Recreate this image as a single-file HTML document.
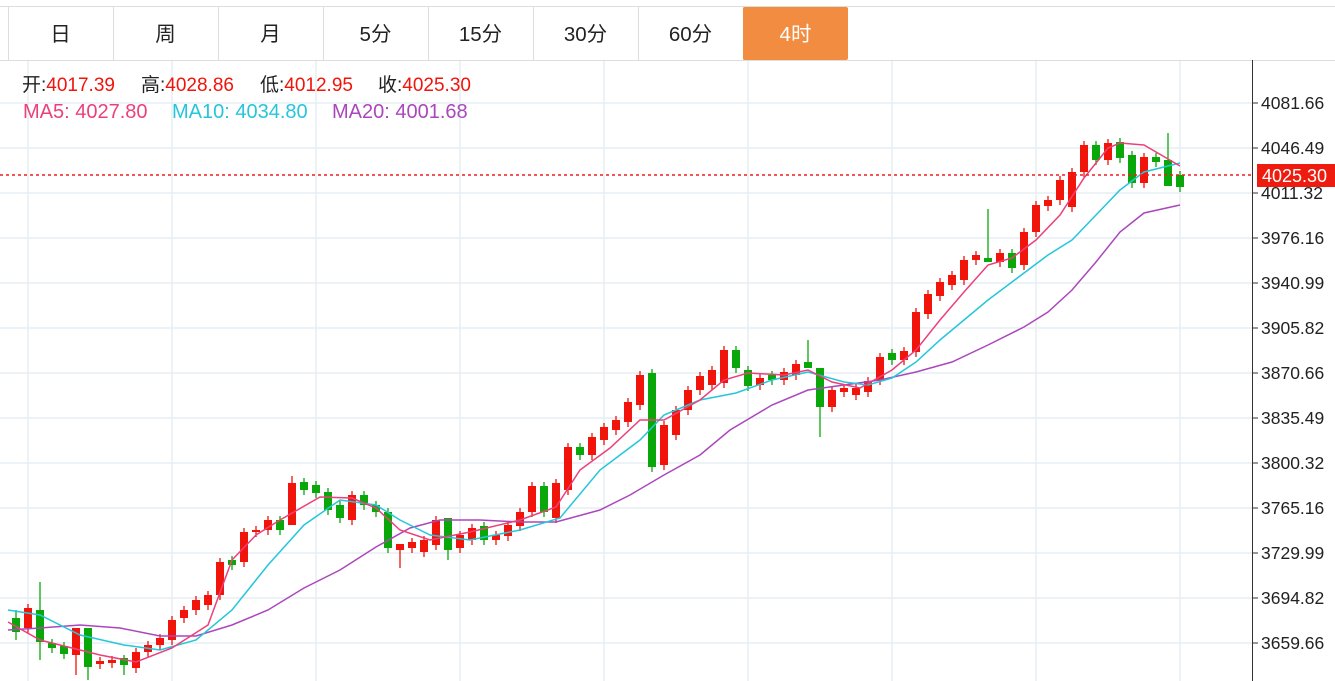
<!DOCTYPE html>
<html><head><meta charset="utf-8"><style>
body{margin:0;width:1335px;height:681px;overflow:hidden;background:#fff;font-family:"Liberation Sans","Noto Sans CJK SC",sans-serif}
svg{position:absolute;left:0;top:0}
</style></head><body>
<svg id="s" width="1335" height="681" xmlns="http://www.w3.org/2000/svg" font-family="Liberation Sans, Noto Sans CJK SC, sans-serif">
<g stroke="#e6eef4" stroke-width="1.5" id="grid"></g>
<line x1="0" y1="6.5" x2="1335" y2="6.5" stroke="#ddd"/>
<line x1="0" y1="60.5" x2="1335" y2="60.5" stroke="#ddd"/>
<g id="tabs"></g>
<line x1="1252.5" y1="60" x2="1252.5" y2="681" stroke="#333"/>
<g id="axis" font-size="17.5" fill="#222"></g>
<g id="candles"></g>
<polyline fill="none" stroke="#ab47bc" stroke-width="1.5" points="8,630 40,628 80,625 120,628 160,636 196,636 232,625 268,610 304,588 340,570 376,547 410,528 440,520 480,520 520,522 556,522 600,510 630,495 664,475 700,455 730,430 772,405 808,390 844,385 880,380 916,372 952,362 988,345 1024,327 1048,312 1072,290 1096,262 1120,232 1144,213 1180,205"/>
<polyline fill="none" stroke="#26c6da" stroke-width="1.5" points="8,610 40,615 80,635 124,645 160,650 196,640 232,610 268,565 304,525 340,500 376,505 400,520 430,535 470,540 520,530 560,518 600,470 640,440 664,415 700,400 736,393 772,380 808,372 844,382 868,385 892,378 916,362 940,340 964,320 988,300 1012,282 1048,255 1072,240 1096,215 1120,190 1144,172 1180,163"/>
<polyline fill="none" stroke="#ec407a" stroke-width="1.5" points="8,622 40,640 100,655 136,662 172,648 208,625 232,560 256,535 280,520 320,497 352,498 376,508 400,530 430,540 470,532 520,520 556,507 580,470 610,448 640,420 664,420 700,400 724,380 748,373 784,375 808,370 832,382 860,388 892,370 916,350 940,320 964,292 988,265 1012,258 1036,240 1060,215 1084,178 1108,148 1120,143 1144,145 1180,166"/>
<line x1="0" y1="175" x2="1252" y2="175" stroke="#f01e1e" stroke-width="1.5" stroke-dasharray="3,3"/>
<rect x="1257" y="164" width="78" height="23" fill="#ee1c0e"/>
<text x="1262" y="182" font-size="18" fill="#fff">4025.30</text>
<text y="91" font-size="19"><tspan fill="#222" x="22">开:</tspan><tspan fill="#f0140a">4017.39</tspan><tspan fill="#222" x="141">高:</tspan><tspan fill="#f0140a">4028.86</tspan><tspan fill="#222" x="260">低:</tspan><tspan fill="#f0140a">4012.95</tspan><tspan fill="#222" x="378">收:</tspan><tspan fill="#f0140a">4025.30</tspan></text>
<text y="118" font-size="20"><tspan fill="#ec407a" x="23">MA5: 4027.80</tspan><tspan fill="#26c6da" x="172">MA10: 4034.80</tspan><tspan fill="#ab47bc" x="332">MA20: 4001.68</tspan></text>
</svg>
<script>
const N="http://www.w3.org/2000/svg",g=id=>document.getElementById(id);
function el(p,t,a,tx){const e=document.createElementNS(N,t);for(const k in a)e.setAttribute(k,a[k]);if(tx)e.textContent=tx;g(p).appendChild(e);}
const ys=[103,148,193,238,283,328,373,418,463,508,553,598,643],lab=["4081.66","4046.49","4011.32","3976.16","3940.99","3905.82","3870.66","3835.49","3800.32","3765.16","3729.99","3694.82","3659.66"];
ys.forEach((y,i)=>{el("grid","line",{x1:0,x2:1252,y1:y,y2:y});el("axis","line",{x1:1252,x2:1258,y1:y,y2:y,stroke:"#333"});el("axis","text",{x:1261,y:y+6},lab[i]);});
for(let x=28;x<1252;x+=144)el("grid","line",{x1:x,x2:x,y1:60,y2:681});
const tb=["日","周","月","5分","15分","30分","60分","4时"];
tb.forEach((t,i)=>{const x=8+i*105;if(i==7)el("tabs","rect",{x:x,y:7,width:105,height:53,rx:2,fill:"#f28c40"});else el("tabs","line",{x1:x+105.5,x2:x+105.5,y1:7,y2:60,stroke:"#ddd"});el("tabs","text",{x:x+52.5,y:41,"text-anchor":"middle","font-size":"20.5",fill:i==7?"#fff":"#222"},t);});
el("tabs","line",{x1:8.5,x2:8.5,y1:7,y2:60,stroke:"#ddd"});
const C=[[618,632,610,640],[628,608],[610,642,582,660],[643,648],[646,654],[655,628,628,675],[628,667,628,680],[664,661],[663,660],[658,665,655,675],[668,652],[652,645],[645,638],[640,620],[618,610],[610,600],[605,595],[595,562],[560,565],[562,532],[532,530],[530,520],[520,530],[525,483,476,525],[482,490],[485,493],[492,510],[505,518],[520,495],[495,505],[505,512],[512,548],[550,544,544,568],[548,542],[552,540],[545,520],[518,550,518,560],[548,535],[540,528],[526,540],[540,535],[536,525],[526,512],[512,486],[486,512],[518,483],[490,447],[447,455],[455,437],[440,427],[430,420],[422,402],[405,375],[373,467],[465,425],[435,410],[410,390],[390,376],[385,370],[383,350],[350,368],[370,386],[385,378],[375,380],[380,372],[375,364],[362,368,340,368],[368,407,368,437],[407,390],[392,388],[395,388],[392,381],[380,357],[353,360],[360,351],[352,312],[314,294],[296,282],[285,275],[280,260],[260,255],[258,262,209,262],[262,253],[253,268],[265,232],[232,205],[206,200],[200,180],[207,172],[172,145],[145,160],[160,143],[142,158],[155,183],[183,157],[157,162],[160,186,133,186],[175,187]];
const st=(1180-16)/(C.length-1);
C.forEach((c,i)=>{const x=16+i*st,o=c[0],cl=c[1],up=cl<o,col=up?"#f0140a":"#0aa70a";const t=Math.min(o,cl),b=Math.max(o,cl);const hi=c[2]!==undefined?c[2]:t-4,lo=c[3]!==undefined?c[3]:b+5;
el("candles","line",{x1:x,x2:x,y1:hi,y2:lo,stroke:col,"stroke-width":1.3});el("candles","rect",{x:x-4,y:t,width:8,height:Math.max(b-t,1.5),fill:col});});
</script>
</body></html>
